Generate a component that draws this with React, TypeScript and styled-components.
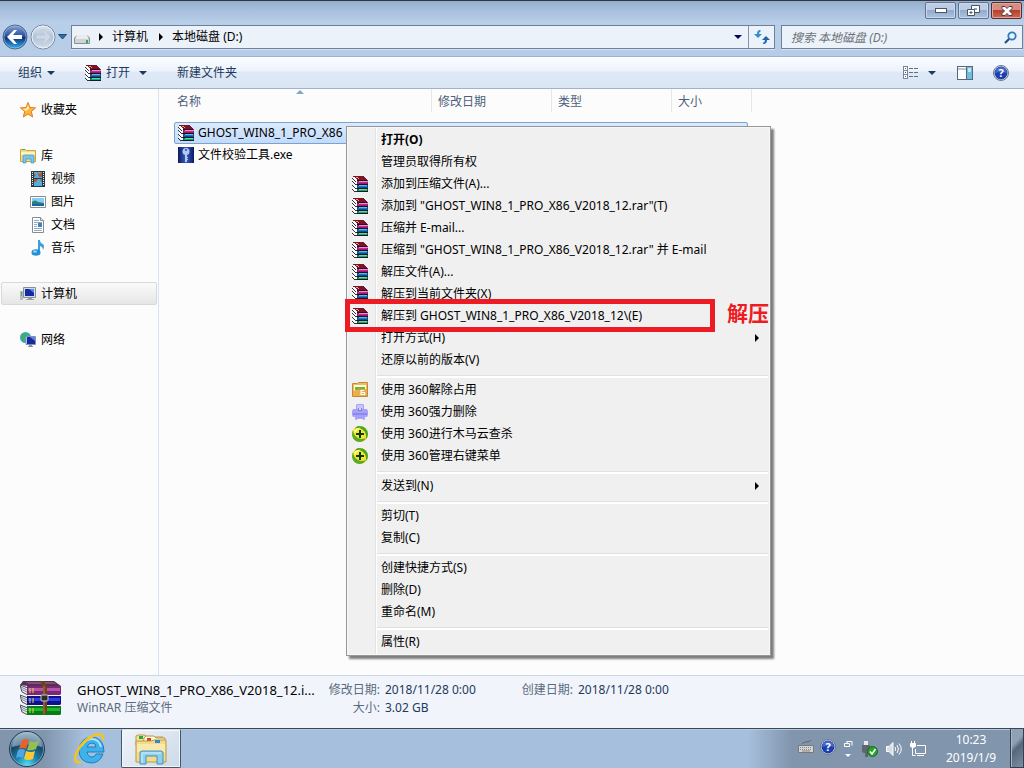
import React from "react";
import styled, { createGlobalStyle, css } from "styled-components";

const GlobalStyle = createGlobalStyle`
  * { box-sizing: border-box; }
  body {
    margin: 0;
    background: #fcfcfc;
    color: #000;
    font-family: "Noto Sans", "Noto Sans CJK SC", sans-serif;
    font-size: 12px;
    line-height: 18px;
  }
  button, input { font: inherit; color: inherit; }
  button { padding: 0; border: 0; background: none; text-align: left; white-space: nowrap; }
  a { color: inherit; text-decoration: none; }
  ul { list-style: none; margin: 0; padding: 0; }
  svg { display: block; flex: none; }
`;

/* ---------- frame ---------- */

const Desktop = styled.div`
  display: flex;
  flex-direction: column;
  min-height: 100vh;
`;

const Frame = styled.header`
  height: 57px;
  flex: none;
  border-top: 1px solid #33363b;
  border-bottom: 1px solid #9db2cf;
  background: linear-gradient(#93aece 0, #a8c0de 10px, #b9cfe9 22px, #b7cde7 100%);
`;

const WindowButtons = styled.div`
  display: flex;
  justify-content: flex-end;
  gap: 2px;
  padding: 1px 2px 0 0;
`;

const WindowButton = styled.button<{ $danger?: boolean }>`
  display: flex;
  align-items: center;
  justify-content: center;
  width: 31px;
  height: 17px;
  border: 1px solid ${(p) => (p.$danger ? "#5c2a33" : "#5f7390")};
  border-radius: 2px;
  box-shadow: inset 0 0 0 1px ${(p) => (p.$danger ? "#dfa79c" : "#c9d8ec")};
  background: ${(p) =>
    p.$danger
      ? "linear-gradient(#d68c80 0 45%, #b8402b 50%, #cc6b50 100%)"
      : "linear-gradient(#bccde3 0 45%, #93abcb 50%, #acc3e0 100%)"};
`;

const NavRow = styled.div`
  display: flex;
  align-items: center;
  padding: 5px 1px 0 2px;
`;

const HistoryButtons = styled.div`
  display: flex;
  align-items: center;
  gap: 2px;
  height: 26px;
  margin-right: 4px;
`;

const AddressBox = styled.div`
  display: flex;
  flex: 1;
  height: 24px;
  border: 1px solid #6f8098;
  background: #ecf2fa;
  box-shadow: 0 1px 0 #d6e2f1;
`;

const Crumbs = styled.nav`
  display: flex;
  flex: 1;
  align-items: center;
  padding-left: 2px;
  gap: 9px;

  a { padding-right: 2px; line-height: 20px; }
`;

const DropButton = styled.button`
  display: flex;
  align-items: center;
  justify-content: center;
  width: 20px;
`;

const RefreshButton = styled.button`
  display: flex;
  align-items: center;
  justify-content: center;
  width: 26px;
  border-left: 1px solid #8494a9;
`;

const SearchBox = styled.label`
  display: flex;
  align-items: center;
  width: 242px;
  height: 24px;
  margin-left: 6px;
  padding: 0 5px 0 9px;
  border: 1px solid #6f8098;
  background: #ecf2fa;
  box-shadow: 0 1px 0 #d6e2f1;
`;

const SearchInput = styled.input`
  flex: 1;
  min-width: 0;
  height: 20px;
  padding: 0;
  border: 0;
  outline: 0;
  background: none;

  &::placeholder { color: #6d7278; font-style: italic; opacity: 1; }
`;

/* ---------- toolbar ---------- */

const Toolbar = styled.div`
  display: flex;
  align-items: center;
  height: 32px;
  flex: none;
  padding: 0 15px 0 18px;
  color: #1e395b;
  border-bottom: 1px solid #a3b1c9;
  background: linear-gradient(#fbfdff 0, #edf3fb 45%, #dee8f6 50%, #dbe6f4 100%);
`;

const ToolButton = styled.button<{ $after: number }>`
  display: flex;
  align-items: center;
  gap: 5px;
  height: 30px;
  margin-right: ${(p) => p.$after}px;
`;

const Spacer = styled.span`
  flex: 1;
`;

const Caret = styled.span<{ $color?: string; $push?: number }>`
  width: 0;
  height: 0;
  margin-left: ${(p) => p.$push || 0}px;
  border: 4px solid transparent;
  border-top-color: ${(p) => p.$color || "#1e395b"};
  border-bottom: 0;
`;

const RightArrow = styled.span`
  width: 0;
  height: 0;
  border: 4px solid transparent;
  border-left-color: #000;
  border-right: 0;
`;

/* ---------- body ---------- */

const Body = styled.main`
  position: relative;
  display: flex;
  flex: 1;
  min-height: 586px;
`;

const Sidebar = styled.nav`
  display: flex;
  flex-direction: column;
  gap: 23px;
  width: 159px;
  flex: none;
  padding: 9px 1px 0;
  border-right: 1px solid #d4e4f3;
`;

const TreeLink = styled.a<{ $child?: boolean; $active?: boolean }>`
  display: flex;
  align-items: center;
  gap: 5px;
  height: 23px;
  padding-left: ${(p) => (p.$child ? 28 : 18)}px;
  border: 1px solid transparent;
  border-radius: 2px;
  ${(p) =>
    p.$active &&
    css`
      border-color: #d9d9d9;
      background: linear-gradient(#fafafa, #e6e6e6);
    `}
`;

const FileTable = styled.table`
  display: block;
  margin-left: 10px;
  border-spacing: 0;
`;

const HeadRow = styled.tr`
  display: grid;
  grid-template-columns: 263px 120px 120px 80px;
  height: 23px;
`;

const HeadCell = styled.th`
  position: relative;
  padding: 4px 6px 0;
  color: #4c607a;
  font-weight: 400;
  text-align: left;
  border-right: 1px solid #e3e8ee;

  &:first-child { padding-left: 8px; }
`;

const SortMark = styled.span`
  position: absolute;
  top: 1px;
  left: 50%;
  margin-left: -4px;
  border: 4px solid transparent;
  border-top: 0;
  border-bottom-color: #7ba7c9;
`;

const FileBody = styled.tbody`
  display: block;
  padding: 10px 0 0 5px;
`;

const FileRow = styled.tr<{ $selected?: boolean }>`
  display: block;
  width: 574px;
  height: 22px;
  padding: 0 3px;
  border: 1px solid ${(p) => (p.$selected ? "#7da2ce" : "transparent")};
  border-radius: 2px;
  background: ${(p) => (p.$selected ? "linear-gradient(#dcebfc, #c1dbfc)" : "none")};
`;

const FileName = styled.td`
  display: flex;
  align-items: center;
  gap: 4px;
  height: 20px;
  padding: 0;
`;

/* ---------- context menu ---------- */

const Menu = styled.ul`
  position: absolute;
  top: 37px;
  left: 346px;
  width: 425px;
  padding: 2px;
  border: 1px solid #979797;
  background: linear-gradient(90deg, transparent 26px, #e2e3e3 26px 27px, #fff 27px 28px, transparent 28px) 2px 0 no-repeat, #f0f0f0;
  box-shadow: inset 0 0 0 1px #f7f7f7, 3px 3px 2px rgba(0, 0, 0, 0.5);
`;

const MenuEntry = styled.li`
  position: relative;
`;

const MenuButton = styled.button<{ $strong?: boolean }>`
  display: flex;
  align-items: center;
  width: 100%;
  height: 22px;
  padding: 0 9px 0 3px;
  font-weight: ${(p) => (p.$strong ? 700 : 400)};
`;

const IconSlot = styled.span`
  width: 29px;
  flex: none;
`;

const MenuText = styled.span`
  flex: 1;
`;

const Divider = styled.li`
  height: 8px;
  padding: 4px 0 0 28px;

  &::before {
    content: "";
    display: block;
    height: 2px;
    background: #fff;
    border-top: 1px solid #e0e0e0;
  }
`;

const Highlight = styled.span`
  position: absolute;
  top: -6px;
  left: -4px;
  z-index: 1;
  width: 370px;
  height: 33px;
  border: 5px solid #ed1c24;
  pointer-events: none;
`;

const Note = styled.strong`
  position: absolute;
  top: -6px;
  left: 378px;
  color: #ed1c24;
  font-size: 21px;
  line-height: 28px;
  white-space: nowrap;
`;

/* ---------- details pane ---------- */

const Details = styled.footer`
  display: flex;
  height: 53px;
  flex: none;
  padding: 5px 20px 0;
  border-top: 1px solid #c8d7ea;
  background: #f1f5fb;
  color: #1e395b;
`;

const DetailsName = styled.div`
  width: 251px;
  padding-left: 16px;
  box-sizing: content-box;
  color: #5a6a80;
  white-space: nowrap;
`;

const DetailsTitle = styled.div`
  color: #000;
  font-size: 13px;
`;

const Facts = styled.dl<{ $width: number }>`
  display: grid;
  grid-template-columns: 52px auto;
  column-gap: 5px;
  align-content: start;
  justify-content: start;
  width: ${(p) => p.$width}px;
  margin: 0;

  dt { color: #5a6a80; text-align: right; white-space: nowrap; }
  dd { margin: 0; white-space: nowrap; }
`;

/* ---------- taskbar ---------- */

const Taskbar = styled.footer`
  display: flex;
  align-items: stretch;
  height: 40px;
  flex: none;
  color: #fff;
  border-top: 1px solid #3c4754;
  box-shadow: inset 0 1px 0 #b9cbe0;
  background: linear-gradient(90deg, #8195ad 0, #8195ad 44px, #a6bfdc 84px, #a6bfdc calc(100% - 276px), #8195ad calc(100% - 232px));
`;

const StartButton = styled.button`
  padding: 0 0 0 9px;
  width: 74px;
`;

const TaskButton = styled.button<{ $open?: boolean }>`
  display: flex;
  justify-content: center;
  align-items: center;
  width: ${(p) => (p.$open ? 60 : 32)}px;
  margin-right: ${(p) => (p.$open ? 0 : 15)}px;
  ${(p) =>
    p.$open &&
    css`
      border: 1px solid #45556b;
      border-top-color: #d5e0ec;
      border-radius: 2px;
      box-shadow: inset 0 0 0 1px #f3f7fb;
      background: linear-gradient(135deg, #f0f4f9, #cbd9e9);
    `}
`;

const Tray = styled.div`
  display: flex;
  align-items: center;
  gap: 8px;
`;

const TrayPair = styled.div`
  display: flex;
  align-items: center;
  gap: 6px;
  padding-bottom: 4px;
`;

const Clock = styled.time`
  width: 84px;
  padding: 2px 0 0 6px;
  text-align: center;
  line-height: 18px;
`;

const ShowDesktop = styled.button`
  width: 14px;
  border: 1px solid #33404f;
  border-top: 0;
  box-shadow: inset 1px 0 0 #a9b8c9;
  background: linear-gradient(135deg, #90a1b5 0 35%, #55677d 50%, #7d8fa5);
`;

/* ---------- icons ---------- */

const RarIcon = () => (
  <svg width="16" height="16" viewBox="0 0 16 16" shapeRendering="crispEdges" aria-hidden="true">
    <path d="M1 0h11v1h1v1h1v1h1v1h1v12H4v-1H3v-1H2v-1H1z" fill="#fff" />
    <path d="M1 0h11v1h1v1h1v1h1v1H5V3H4V2H3V1H1z" fill="#7d1230" />
    <path d="M4 1h2v1H4zM6 2h1v1H6z" fill="#e0b52a" />
    <path d="M5 4h11v4H5z" fill="#a0146a" />
    <path d="M7 5h9v1H7z" fill="#f08cc8" />
    <path d="M6 6h9v1H6z" fill="#c8288c" />
    <path d="M5 8h11v4H5z" fill="#0c4c94" />
    <path d="M7 9h8v1H7z" fill="#58b8f0" />
    <path d="M6 10h9v1H6z" fill="#1c78c4" />
    <path d="M5 12h11v4H5z" fill="#087048" />
    <path d="M7 13h8v1H7z" fill="#50e0a8" />
    <path d="M6 14h9v1H6z" fill="#18a870" />
    <path d="M5 4h10v1H5zM5 8h11v1H5zM5 12h11v1H5zM5 15h11v1H5z" fill="#1c1420" />
    <path d="M0 2h1v1H0zM1 3h1v1H1zM2 4h1v1H2zM3 5h1v1H3zM0 5h1v1H0zM1 6h1v1H1zM2 7h1v1H2zM3 8h2v1H3zM0 9h1v1H0zM1 10h1v1H1zM2 11h1v1H2zM3 12h2v1H3zM0 13h1v1H0zM1 14h1v1H1zM2 15h3v1H2z" fill="#333" />
  </svg>
);

const RarLarge = () => (
  <svg width="41" height="34" viewBox="0 0 41 34" aria-hidden="true">
    {[
      ["#7b2777", "#b455a8", 4],
      ["#10108c", "#2c3ee0", 14],
      ["#087a16", "#1fb52c", 24],
    ].map(([dark, light, y]) => (
      <g key={y} transform={`translate(0 ${y})`}>
        <path d="M0 0l8 3v7L2 7z" fill="#eef0f2" stroke="#454b55" />
        <path d="M1 2l6 3M1 4l6 3" stroke="#7a8290" strokeWidth="1" />
        <path d="M7 1h34v8l-1 1H7z" fill={dark as string} />
        <path d="M8 3h32v3H8z" fill={light as string} />
        <path d="M10 3v5M13 3v5" stroke="#e7d64a" strokeWidth="1" />
      </g>
    ))}
    <path d="M0 4L3 0h31l7 5H8z" fill="#55304f" />
    <path d="M5 1h28l4 2H9z" fill="#825078" />
    <path d="M20 0h4l3 5v28h-4V6z" fill="#6e431c" />
    <path d="M24 5v28" stroke="#b07a40" />
    <rect x="21" y="14" width="7" height="6" rx="1" fill="#2c2c2c" stroke="#c8c8c8" />
  </svg>
);

const DriveIcon = () => (
  <svg width="16" height="16" viewBox="0 0 16 16" aria-hidden="true">
    <path d="M3 6h10l3 3v5q0 1-1 1H1q-1 0-1-1V9z" fill="#8b9096" />
    <path d="M3 6h10l2 4H1z" fill="#e9ebed" />
    <path d="M1 10h14v4H1z" fill="#cfd2d6" />
    <rect x="12" y="11" width="2" height="3" fill="#2fae3d" />
  </svg>
);

const BackIcon = () => (
  <svg width="26" height="26" viewBox="0 0 26 26" aria-hidden="true">
    <defs>
      <linearGradient id="back" x1="0" y1="0" x2="0" y2="1">
        <stop offset="0" stopColor="#8aa5d6" />
        <stop offset="0.48" stopColor="#244d9c" />
        <stop offset="0.52" stopColor="#0d2f7c" />
        <stop offset="1" stopColor="#35b4f2" />
      </linearGradient>
    </defs>
    <circle cx="13" cy="13" r="12" fill="url(#back)" stroke="#4c6486" />
    <circle cx="13" cy="13" r="11" fill="none" stroke="#a8c0e2" strokeOpacity="0.6" />
    <path d="M5 13l7-7h3l-4 5h9v4h-9l4 5h-3z" fill="#fff" />
  </svg>
);

const ForwardIcon = () => (
  <svg width="26" height="26" viewBox="0 0 26 26" aria-hidden="true">
    <defs>
      <linearGradient id="fwd" x1="0" y1="0" x2="0" y2="1">
        <stop offset="0" stopColor="#dbe5f1" />
        <stop offset="0.5" stopColor="#b3c3d7" />
        <stop offset="1" stopColor="#d3dfec" />
      </linearGradient>
    </defs>
    <circle cx="13" cy="13" r="12" fill="url(#fwd)" stroke="#74879f" />
    <circle cx="13" cy="13" r="11" fill="none" stroke="#edf3f9" />
    <path d="M21 13l-7-7h-3l4 5H6v4h9l-4 5h3z" fill="#ccd8e6" stroke="#b3c2d4" strokeWidth="0.6" />
  </svg>
);

const RefreshIcon = () => (
  <svg width="16" height="14" viewBox="0 0 16 14" aria-hidden="true">
    <path d="M6 0Q3 0 3 4H0l4 4 4-4H5q0-2 2-3z" fill="#2f8fd6" />
    <path d="M9 14q4 0 4-4h3l-4-4-4 4h3q0 2-2 3z" fill="#1d63ae" />
  </svg>
);

const SearchIcon = () => (
  <svg width="13" height="13" viewBox="0 0 13 13" fill="none" aria-hidden="true">
    <circle cx="8" cy="5" r="3.700" stroke="#2d7cc3" strokeWidth="1.800" />
    <path d="M5 8l-4 4" stroke="#1c4f8f" strokeWidth="2.200" />
  </svg>
);

const ViewIcon = () => (
  <svg width="15" height="13" viewBox="0 0 15 13" shapeRendering="crispEdges" aria-hidden="true">
    {[0, 4, 8].map((y) => (
      <g key={y}>
        <rect x="0.500" y={y + 0.5} width="4" height="4" fill="#fff" stroke="#7c8794" />
        <rect x="2" y={y + 2} width="1" height="1" fill={y === 4 ? "#d0221c" : "#3c71b8"} />
        <path d={`M6 ${y + 2.5}h4M11 ${y + 2.5}h4`} stroke="#5f7186" />
      </g>
    ))}
  </svg>
);

const PaneIcon = () => (
  <svg width="16" height="14" viewBox="0 0 16 14" aria-hidden="true">
    <rect x="0.500" y="0.500" width="15" height="13" fill="#fff" stroke="#56677e" />
    <path d="M1 3h9" stroke="#7a8a9e" />
    <rect x="10" y="1" width="5" height="12" fill="#6cc0de" />
    <path d="M9.500 1v12" stroke="#56677e" />
    <path d="M11 2h3v4h-3z" fill="#bfe8f4" />
  </svg>
);

const HelpIcon = () => (
  <svg width="16" height="16" viewBox="0 0 16 16" aria-hidden="true">
    <circle cx="8" cy="8" r="7.500" fill="#e4e9f0" stroke="#6d7684" />
    <circle cx="8" cy="8" r="6.500" fill="#1b3fae" />
    <path d="M2 8a6 6 0 0 1 12 0q-6-2-12 0z" fill="#4468cc" />
    <text x="8" y="12" fontSize="11" fontWeight="700" textAnchor="middle" fill="#fff">?</text>
  </svg>
);

const StarIcon = () => (
  <svg width="16" height="16" viewBox="0 0 16 16" aria-hidden="true">
    <path d="M8 0.500l2 5 5.500.4-4.200 3.600 1.400 5.500L8 12l-4.700 3 1.400-5.500L0.500 5.900 6 5.500z" fill="#fbb53c" stroke="#df7d22" />
    <path d="M8 3l1.300 3.500L6 9l-3.500-2L6.500 6.500z" fill="#fff0b0" />
  </svg>
);

const LibraryIcon = () => (
  <svg width="16" height="16" viewBox="0 0 16 16" aria-hidden="true">
    <path d="M0.500 1.500h5l1 1h9v11h-15z" fill="#f5dd85" stroke="#c9a548" />
    <path d="M1 4h14v3H1z" fill="#fff3bd" />
    <path d="M2 1h3v1H2z" fill="#3bb34a" />
    <path d="M3 8q0-1 1-1h9q1 0 1 1v7h-3v-4H6v4H3z" fill="#7cc3ea" stroke="#4492c4" strokeWidth="0.700" />
  </svg>
);

const VideoIcon = () => (
  <svg width="16" height="16" viewBox="0 0 16 16" aria-hidden="true">
    <path d="M1 0h14v16H1z" fill="#2d3940" />
    <path d="M4 1h8v6H4zM4 8h8v7H4z" fill="#53aee0" />
    <path d="M4 2l2 2-2 2zM7 1l2 2 3-2v5H9zM4 8h4l-2 3H4zM10 9l2-1v3z" fill="#b05737" />
    <path d="M2.500 1v14M13.500 1v14" stroke="#e9eff2" strokeDasharray="1 1" />
  </svg>
);

const PictureIcon = () => (
  <svg width="16" height="16" viewBox="0 0 16 16" aria-hidden="true">
    <path d="M0.500 2.500h15v11H0.500z" fill="#fff" stroke="#858d94" />
    <path d="M2 4h12v8H2z" fill="#86cdf0" />
    <path d="M2 8q3-3 6 0l6 1v3H2z" fill="#2b7e75" />
    <path d="M2 10h12v2H2z" fill="#1d62a3" />
  </svg>
);

const DocumentIcon = () => (
  <svg width="16" height="16" viewBox="0 0 16 16" aria-hidden="true">
    <path d="M2.500 0.500h8l3 3v12h-11z" fill="#fff" stroke="#858d94" />
    <path d="M10.500 0.500v3h3" fill="#e1e6ea" stroke="#858d94" />
    <path d="M4 3.500h5M4 5.500h8M4 7.500h3M4 9.500h3M4 11.500h8M4 13.500h8" stroke="#97a9bc" />
    <path d="M8 6h4v4H8z" fill="#3d82bd" />
  </svg>
);

const MusicIcon = () => (
  <svg width="16" height="16" viewBox="0 0 16 16" aria-hidden="true">
    <path d="M8 0h2q0 3 3 4 2 2 0 6 0-3-3-4v7H8z" fill="#3d9edb" />
    <ellipse cx="6" cy="12.500" rx="4.500" ry="3.300" fill="#2490d5" />
    <ellipse cx="5" cy="11.500" rx="2" ry="1.200" fill="#8ed1f4" />
  </svg>
);

const ComputerIcon = () => (
  <svg width="16" height="16" viewBox="0 0 16 16" aria-hidden="true">
    <path d="M0 5h3v9H0z" fill="#b5bbc0" />
    <path d="M1 6h1v4H1z" fill="#42b348" />
    <path d="M3.500 1.500h12v10h-12z" fill="#d7dbdf" stroke="#878f98" />
    <path d="M5 3h9v7H5z" fill="#1429a8" />
    <path d="M9 3h5v4z" fill="#5b86e8" />
    <path d="M8 12h4v1h2v1H6v-1h2z" fill="#989fa6" />
  </svg>
);

const NetworkIcon = () => (
  <svg width="16" height="16" viewBox="0 0 16 16" aria-hidden="true">
    <circle cx="5.500" cy="5.500" r="5.500" fill="#36a2df" />
    <path d="M2 2l4-1 1 3-3 2 1 4-3-2-1-4zM8 1l2 3-2 1z" fill="#42b24a" />
    <path d="M6 4.500h9.500v8H6z" fill="#dce1e6" stroke="#8791a0" />
    <path d="M7 5h8v7H7z" fill="#1429a8" />
    <path d="M10 5h5v4z" fill="#5b86e8" />
    <path d="M9 13h3v1h1v1H8v-1h1z" fill="#8992a0" />
  </svg>
);

const KeyIcon = () => (
  <svg width="16" height="16" viewBox="0 0 16 16" aria-hidden="true">
    <defs>
      <linearGradient id="keybg">
        <stop offset="0" stopColor="#0b1b60" />
        <stop offset="0.5" stopColor="#3c5cc0" />
        <stop offset="1" stopColor="#0b1b60" />
      </linearGradient>
    </defs>
    <path d="M0 0h16v16H0z" fill="url(#keybg)" />
    <circle cx="8" cy="4.500" r="3.500" fill="#b4c6f4" />
    <circle cx="8" cy="3" r="1" fill="#2a449c" />
    <path d="M7 7h2v8H7zM9 10h1v1H9zM9 12h1v1H9z" fill="#b4c6f4" />
  </svg>
);

const FolderLockIcon = () => (
  <svg width="16" height="16" viewBox="0 0 16 16" aria-hidden="true">
    <path d="M0.500 1.500h5l1-1h9v14h-15z" fill="#eebb58" stroke="#c28a35" />
    <path d="M2 3h12v9H2z" fill="#fffbe9" />
    <path d="M3 5h10v3H3z" fill="#6fb836" />
    <path d="M1 9q4-2 14-2v7H1z" fill="#eead4c" />
    <path d="M12 8.500H9v4h3.500v-2H9" fill="none" stroke="#fff" strokeWidth="1.200" />
  </svg>
);

const ShredIcon = () => (
  <svg width="16" height="16" viewBox="0 0 16 16" aria-hidden="true">
    <path d="M4 1l1-1h6l1 1v4h3l1 2v4l-1 2h-2v2l-1 1h-1v-1H5v1H4l-1-1v-2H1l-1-2V7l1-2h3z" fill="#a7a2f8" />
    <path d="M5 1h6v4H5z" fill="#c5c8ff" />
    <path d="M6 4h4v3H6z" fill="#7f7aea" />
    <path d="M7 4h2v2H7z" fill="#dcdcff" />
    <path d="M1 9h14v2H1z" fill="#8d87ee" />
  </svg>
);

const ShieldPlusIcon = () => (
  <svg width="16" height="16" viewBox="0 0 16 16" aria-hidden="true">
    <circle cx="8" cy="8" r="8" fill="#f6e62a" />
    <path d="M7 0q8 0 9 8 0 3-2 5 1-9-7-11-3 0-4 1 1-3 4-3z" fill="#4aa32a" />
    <path d="M1 4q1 8 8 9 3 0 5-1-2 4-7 4-6-1-7-7 0-3 1-5z" fill="#58a92c" />
    <path d="M2 5q3-4 7-3-4 1-6 5z" fill="#fff9a8" />
    <path d="M7 4h2v3h3v2H9v3H7V9H4V7h3z" fill="#0f3c14" />
  </svg>
);

const StartIcon = () => (
  <svg width="36" height="36" viewBox="0 0 36 36" aria-hidden="true">
    <defs>
      <radialGradient id="orb" cx="0.5" cy="0.95" r="0.9">
        <stop offset="0" stopColor="#4ce0f7" />
        <stop offset="0.35" stopColor="#1e83ae" />
        <stop offset="0.7" stopColor="#164666" />
        <stop offset="1" stopColor="#6f8fa8" />
      </radialGradient>
    </defs>
    <circle cx="18" cy="18" r="17.500" fill="url(#orb)" stroke="#23394f" />
    <circle cx="18" cy="18" r="16.500" fill="none" stroke="#9fc0d4" strokeOpacity="0.6" />
    <path d="M3 16A15 15 0 0 1 33 16Q18 11 3 16z" fill="#c4d8e4" opacity="0.500" />
    <path d="M13 9q4-2 7 0l-3 9q-3-2-7 0z" fill="#e8602c" />
    <path d="M21 10q4 2 9 0l-3 8q-4 2-9 1z" fill="#94c052" />
    <path d="M9 19q4-2 7 0l-2 8q-3-2-7 0z" fill="#4fa6e6" />
    <path d="M17 20q5 2 9 0l-2 8q-5 2-9 0z" fill="#fdc834" />
  </svg>
);

const BrowserIcon = () => (
  <svg width="32" height="32" viewBox="0 0 32 32" fill="none" aria-hidden="true">
    <path d="M29 21q-3 9-12 9Q5 29 5 17 6 5 18 4q12 1 12 15H13q1 5 5 5 3 0 4-3zM13 14h9q0-4-4-4t-5 4z" fill="#3eb2ea" stroke="#1c7fc0" />
    <path d="M8 13q3-7 10-7 7 0 9 8" stroke="#a9e2fa" strokeWidth="2" />
    <path d="M7 29Q-1 31 2 21 8 7 21 2q9-3 8 5" stroke="#f5c41c" strokeWidth="2.500" />
  </svg>
);

const FolderStackIcon = () => (
  <svg width="34" height="32" viewBox="0 0 34 32" aria-hidden="true">
    <path d="M2 3l2-1h7l2 2h16v8H2z" fill="#f5e29b" stroke="#b99a48" />
    <path d="M5 3h4v3H5z" fill="#25a741" />
    <path d="M10 5l2-2h8l2 2h9v8H9z" fill="#fff7d6" stroke="#b99a48" />
    <path d="M13 5h4v3h-4z" fill="#d0432a" />
    <path d="M2 8h15l3-1h12v22H2z" fill="#f3db88" stroke="#b99a48" />
    <path d="M21 7h5v3h-5z" fill="#3585d3" />
    <path d="M3 11h28v8H3z" fill="#f9e9ad" />
    <path d="M6 31V20q0-2 2-2h19q2 0 2 2v11h-6v-8H12v8z" fill="#8fd0ee" stroke="#478fba" />
    <path d="M8 30V20h19" fill="none" stroke="#d8f2fc" />
  </svg>
);

const KeyboardIcon = () => (
  <svg width="16" height="14" viewBox="0 0 16 14" fill="none" aria-hidden="true">
    <path d="M4 4q1-2 4-2 4 0 5-2" stroke="#5d6570" />
    <path d="M0.500 5.500h15v7H0.500z" fill="#d6d5cf" stroke="#76797c" />
    <path d="M2 7.500h12M2 9.500h12" stroke="#85888a" strokeDasharray="1 1" />
    <path d="M4 11h8" stroke="#85888a" />
  </svg>
);

const RestoreTinyIcon = () => (
  <svg width="9" height="18" viewBox="0 0 9 18" fill="none" aria-hidden="true">
    <path d="M3 1.500h5v4M0.500 3.500h5v3h-5zM3 1v2" stroke="#fff" />
    <path d="M1 14h6l-3 3z" fill="#fff" />
  </svg>
);

const UsbIcon = () => (
  <svg width="17" height="16" viewBox="0 0 17 16" aria-hidden="true">
    <path d="M3 0h4v4H3z" fill="#e7eaee" />
    <path d="M1 4h8v6q0 2-2 2v4H4v-4q-3 0-3-2z" fill="#5e676f" />
    <circle cx="11.500" cy="10.500" r="5" fill="#2ca22e" stroke="#126c1c" />
    <path d="M9 10.500l2 2.500 3.500-5" fill="none" stroke="#fff" strokeWidth="1.600" />
  </svg>
);

const SpeakerIcon = () => (
  <svg width="16" height="16" viewBox="0 0 16 16" fill="none" stroke="#fff" aria-hidden="true">
    <path d="M0.500 5.500H3l4-4v13l-4-4H0.500z" fill="#d7dde4" />
    <path d="M9 6q1.500 2 0 4M11 4q3 4 0 8M13 2.500q4.500 5.500 0 11" />
  </svg>
);

const LanIcon = () => (
  <svg width="16" height="16" viewBox="0 0 16 16" fill="none" stroke="#fff" aria-hidden="true">
    <path d="M7 4.500h8.500v8H5.500V8M7 14.500h7M2.500 6v8.500h3" />
    <path d="M0.500 2.500h5v3q-2.500 2-5 0zM1.500 0v2M4.500 0v2" fill="#fff" />
  </svg>
);

/* ---------- data ---------- */

type MenuItem = { text: string; icon?: () => React.ReactElement; strong?: boolean; more?: boolean; marked?: boolean };

const menuGroups: MenuItem[][] = [
  [
    { text: "打开(O)", strong: true },
    { text: "管理员取得所有权" },
    { text: "添加到压缩文件(A)...", icon: RarIcon },
    { text: '添加到 "GHOST_WIN8_1_PRO_X86_V2018_12.rar"(T)', icon: RarIcon },
    { text: "压缩并 E-mail...", icon: RarIcon },
    { text: '压缩到 "GHOST_WIN8_1_PRO_X86_V2018_12.rar" 并 E-mail', icon: RarIcon },
    { text: "解压文件(A)...", icon: RarIcon },
    { text: "解压到当前文件夹(X)", icon: RarIcon },
    { text: "解压到 GHOST_WIN8_1_PRO_X86_V2018_12\\(E)", icon: RarIcon, marked: true },
    { text: "打开方式(H)", more: true },
    { text: "还原以前的版本(V)" },
  ],
  [
    { text: "使用 360解除占用", icon: FolderLockIcon },
    { text: "使用 360强力删除", icon: ShredIcon },
    { text: "使用 360进行木马云查杀", icon: ShieldPlusIcon },
    { text: "使用 360管理右键菜单", icon: ShieldPlusIcon },
  ],
  [{ text: "发送到(N)", more: true }],
  [{ text: "剪切(T)" }, { text: "复制(C)" }],
  [{ text: "创建快捷方式(S)" }, { text: "删除(D)" }, { text: "重命名(M)" }],
  [{ text: "属性(R)" }],
];

const tree = [
  [{ text: "收藏夹", Icon: StarIcon }],
  [
    { text: "库", Icon: LibraryIcon },
    { text: "视频", Icon: VideoIcon, child: true },
    { text: "图片", Icon: PictureIcon, child: true },
    { text: "文档", Icon: DocumentIcon, child: true },
    { text: "音乐", Icon: MusicIcon, child: true },
  ],
  [{ text: "计算机", Icon: ComputerIcon, active: true }],
  [{ text: "网络", Icon: NetworkIcon }],
] as { text: string; Icon: () => React.ReactElement; child?: boolean; active?: boolean }[][];

const files = [
  { name: "GHOST_WIN8_1_PRO_X86", Icon: RarIcon, selected: true },
  { name: "文件校验工具.exe", Icon: KeyIcon, selected: false },
];

/* ---------- page ---------- */

function TitleArea() {
  return (
    <Frame>
      <WindowButtons>
        <WindowButton aria-label="最小化">
          <svg width="12" height="6" viewBox="0 0 12 6"><rect x="0.500" y="0.500" width="11" height="4" fill="#fff" stroke="#4b5563" /></svg>
        </WindowButton>
        <WindowButton aria-label="还原">
          <svg width="13" height="12" viewBox="0 0 13 12">
            <path d="M4.500 0.500h8v7h-8z" fill="#fff" stroke="#4b5563" />
            <path d="M7 3h3v2H7z" fill="#8ba3c3" />
            <path d="M0.500 4.500h7v6h-7z" fill="#fff" stroke="#4b5563" />
            <path d="M3 7h2v1H3z" fill="#8ba3c3" stroke="#4b5563" />
          </svg>
        </WindowButton>
        <WindowButton $danger aria-label="关闭">
          <svg width="12" height="10" viewBox="0 0 12 10"><path d="M1 0.500h3l2 2 2-2h3v2L8.500 5 11 7.500v2H8l-2-2-2 2H1v-2L3.500 5 1 2.500z" fill="#fff" stroke="#553a44" /></svg>
        </WindowButton>
      </WindowButtons>
      <NavRow>
        <HistoryButtons>
          <button aria-label="后退"><BackIcon /></button>
          <button aria-label="前进"><ForwardIcon /></button>
          <button aria-label="历史记录">
            <svg width="9" height="6" viewBox="0 0 9 6"><path d="M0.500 0.500h8l-4 4.500z" fill="#2e6fa7" stroke="#1f4c7c" /></svg>
          </button>
        </HistoryButtons>
        <AddressBox>
          <Crumbs aria-label="地址">
            <DriveIcon />
            <RightArrow />
            <a href="#computer">计算机</a>
            <RightArrow />
            <a href="#d">本地磁盘 (D:)</a>
          </Crumbs>
          <DropButton aria-label="以前的位置"><Caret $color="#04045c" /></DropButton>
          <RefreshButton aria-label="刷新"><RefreshIcon /></RefreshButton>
        </AddressBox>
        <SearchBox>
          <SearchInput type="text" placeholder="搜索 本地磁盘 (D:)" aria-label="搜索" />
          <SearchIcon />
        </SearchBox>
      </NavRow>
    </Frame>
  );
}

function ContextMenu() {
  return (
    <Menu role="menu">
      {menuGroups.map((group, index) => (
        <React.Fragment key={index}>
          {index > 0 && <Divider role="separator" />}
          {group.map(({ text, icon: Icon, strong, more, marked }) => (
            <MenuEntry key={text} role="none">
              <MenuButton role="menuitem" $strong={strong}>
                <IconSlot>{Icon && <Icon />}</IconSlot>
                <MenuText>{text}</MenuText>
                {more && <RightArrow />}
              </MenuButton>
              {marked && (
                <>
                  <Highlight />
                  <Note>解压</Note>
                </>
              )}
            </MenuEntry>
          ))}
        </React.Fragment>
      ))}
    </Menu>
  );
}

export default function App() {
  return (
    <Desktop>
      <GlobalStyle />
      <TitleArea />
      <Toolbar>
        <ToolButton $after={30}>组织<Caret /></ToolButton>
        <ToolButton $after={30}><RarIcon />打开<Caret $push={4} /></ToolButton>
        <ToolButton $after={0}>新建文件夹</ToolButton>
        <Spacer />
        <ToolButton $after={21} aria-label="更改视图"><ViewIcon /><Caret $push={5} /></ToolButton>
        <ToolButton $after={20} aria-label="显示预览窗格"><PaneIcon /></ToolButton>
        <ToolButton $after={0} aria-label="帮助"><HelpIcon /></ToolButton>
      </Toolbar>
      <Body>
        <Sidebar>
          {tree.map((group, index) => (
            <div key={index}>
              {group.map(({ text, Icon, child, active }) => (
                <TreeLink key={text} href="#tree" $child={child} $active={active}>
                  <Icon />
                  {text}
                </TreeLink>
              ))}
            </div>
          ))}
        </Sidebar>
        <FileTable>
          <thead>
            <HeadRow>
              <HeadCell>名称<SortMark /></HeadCell>
              <HeadCell>修改日期</HeadCell>
              <HeadCell>类型</HeadCell>
              <HeadCell>大小</HeadCell>
            </HeadRow>
          </thead>
          <FileBody>
            {files.map(({ name, Icon, selected }) => (
              <FileRow key={name} $selected={selected}>
                <FileName><Icon />{name}</FileName>
              </FileRow>
            ))}
          </FileBody>
        </FileTable>
        <ContextMenu />
      </Body>
      <Details>
        <RarLarge />
        <DetailsName>
          <DetailsTitle>GHOST_WIN8_1_PRO_X86_V2018_12.i...</DetailsTitle>
          WinRAR 压缩文件
        </DetailsName>
        <Facts $width={193}>
          <dt>修改日期:</dt><dd>2018/11/28 0:00</dd>
          <dt>大小:</dt><dd>3.02 GB</dd>
        </Facts>
        <Facts $width={160}>
          <dt>创建日期:</dt><dd>2018/11/28 0:00</dd>
        </Facts>
      </Details>
      <Taskbar>
        <StartButton aria-label="开始"><StartIcon /></StartButton>
        <TaskButton aria-label="浏览器"><BrowserIcon /></TaskButton>
        <TaskButton $open aria-label="资源管理器"><FolderStackIcon /></TaskButton>
        <Spacer />
        <Tray>
          <TrayPair>
            <KeyboardIcon />
            <HelpIcon />
          </TrayPair>
          <RestoreTinyIcon />
          <UsbIcon />
          <SpeakerIcon />
          <LanIcon />
        </Tray>
        <Clock>10:23<br />2019/1/9</Clock>
        <ShowDesktop aria-label="显示桌面" />
      </Taskbar>
    </Desktop>
  );
}
